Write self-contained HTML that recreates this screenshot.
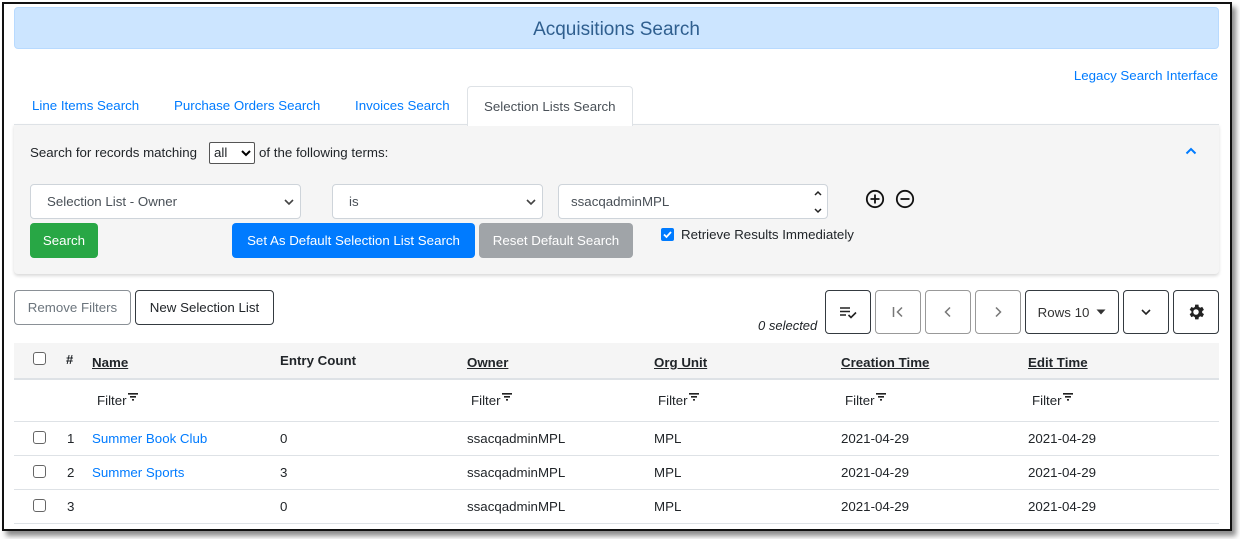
<!DOCTYPE html>
<html><head><meta charset="utf-8"><style>
*{box-sizing:border-box;margin:0;padding:0}
body{width:1240px;height:539px;background:#fff;font-family:"Liberation Sans",sans-serif;font-size:13.3px;color:#212529;position:relative;overflow:hidden}
.a{position:absolute}
.frame{left:2px;top:2px;width:1230px;height:529px;border:2px solid #111;box-shadow:4px 5px 5px rgba(0,0,0,.45)}
.blue{color:#007bff}
.btn{position:absolute;border-radius:4px;display:flex;align-items:center;justify-content:center;font-size:13.3px}
.ob{border:1px solid #343a40;background:#fff}
.og{border:1px solid #6c757d;background:#fff}
.sel{position:absolute;background:#fff;border:1px solid #ced4da;border-radius:4px;display:flex;align-items:center;padding-left:16px;color:#495057}
.cb{position:absolute;width:13px;height:13px;border:1px solid #666;border-radius:3px;background:#fff}
.hl{position:absolute;left:14px;width:1205px;height:1px;background:#dee2e6}
.th{font-weight:bold}
.u{text-decoration:underline;font-weight:bold}
</style></head><body>
<div class="a frame"></div>
<div class="a" style="left:14px;top:7px;width:1205px;height:42px;background:#cce5ff;border:1px solid #b8daff;border-radius:4px;display:flex;align-items:center;justify-content:center;font-size:19px;color:#2f5f8f;padding-top:4px">Acquisitions Search</div>
<div class="a blue" style="right:22px;top:68px">Legacy Search Interface</div>
<div class="a blue" style="left:32px;top:98px">Line Items Search</div>
<div class="a blue" style="left:174px;top:98px">Purchase Orders Search</div>
<div class="a blue" style="left:355px;top:98px">Invoices Search</div>
<div class="a" style="left:467px;top:86px;width:166px;height:40px;border:1px solid #dee2e6;border-bottom:none;border-radius:4px 4px 0 0;background:#fff;color:#495057;padding:12px 0 0 16px;z-index:2">Selection Lists Search</div>
<div class="a" style="left:14px;top:124px;width:1205px;height:150px;background:#f5f5f5;border-top:1px solid #dee2e6;border-radius:0 0 4px 4px;box-shadow:0 2px 3px rgba(0,0,0,.15)"></div>
<div class="a" style="left:30px;top:145px">Search for records matching</div>
<div class="a" style="left:209px;top:142px;width:46px;height:22px;border:1px solid #555;border-radius:2px;background:#fff;padding:2px 0 0 4px">all<svg class="a" style="left:31px;top:6px" width="10" height="8" viewBox="0 0 10 8"><path d="M1 2l4 4 4-4" stroke="#000" stroke-width="2" fill="none"/></svg></div>
<div class="a" style="left:259px;top:145px">of the following terms:</div>
<svg class="a" style="left:1185px;top:147px" width="12" height="8" viewBox="0 0 12 8"><path d="M1.5 6.5L6 2l4.5 4.5" stroke="#007bff" stroke-width="2" fill="none"/></svg>
<div class="sel" style="left:30px;top:184px;width:271px;height:35px">Selection List - Owner<svg class="a" style="right:6px;top:13px" width="10" height="8" viewBox="0 0 10 8"><path d="M1 2l4 4 4-4" stroke="#444" stroke-width="1.6" fill="none"/></svg></div>
<div class="sel" style="left:332px;top:184px;width:211px;height:35px">is<svg class="a" style="right:6px;top:13px" width="10" height="8" viewBox="0 0 10 8"><path d="M1 2l4 4 4-4" stroke="#444" stroke-width="1.6" fill="none"/></svg></div>
<div class="sel" style="left:558px;top:184px;width:270px;height:35px;padding-left:12px">ssacqadminMPL<svg class="a" style="right:4px;top:4px" width="10" height="26" viewBox="0 0 10 26"><path d="M2 6l3-3 3 3M2 20l3 3 3-3" stroke="#222" stroke-width="1.5" fill="none"/></svg></div>
<svg class="a" style="left:865px;top:189px" width="20" height="20" viewBox="0 0 20 20"><circle cx="10" cy="10" r="8.2" stroke="#111" stroke-width="1.8" fill="none"/><path d="M10 5.5v9M5.5 10h9" stroke="#111" stroke-width="1.8"/></svg>
<svg class="a" style="left:895px;top:189px" width="20" height="20" viewBox="0 0 20 20"><circle cx="10" cy="10" r="8.2" stroke="#111" stroke-width="1.8" fill="none"/><path d="M5.5 10h9" stroke="#111" stroke-width="1.8"/></svg>
<div class="btn" style="left:30px;top:223px;width:68px;height:35px;background:#28a745;color:#fff">Search</div>
<div class="btn" style="left:232px;top:223px;width:243px;height:35px;background:#007bff;color:#fff">Set As Default Selection List Search</div>
<div class="btn" style="left:479px;top:223px;width:154px;height:35px;background:#a0a4a8;color:#fff">Reset Default Search</div>
<div class="a" style="left:661px;top:228px;width:13px;height:13px;background:#007bff;border-radius:2px"><svg width="13" height="13" viewBox="0 0 13 13"><path d="M3 6.5l2.5 2.5 4.5-5" stroke="#fff" stroke-width="1.8" fill="none"/></svg></div>
<div class="a" style="left:681px;top:227px">Retrieve Results Immediately</div>

<div class="btn og" style="left:14px;top:290px;width:117px;height:35px;color:#6c757d;border-color:#8a9096">Remove Filters</div>
<div class="btn ob" style="left:135px;top:290px;width:139px;height:35px">New Selection List</div>
<div class="a" style="left:758px;top:318px;font-style:italic;font-size:13px">0 selected</div>
<div class="btn ob" style="left:825px;top:290px;width:46px;height:44px"><svg width="20" height="16" viewBox="0 0 20 16"><path d="M2 4h10M2 7.5h10M2 11h6" stroke="#222" stroke-width="1.6"/><path d="M10.5 11l2.5 2.5 5-5" stroke="#222" stroke-width="1.6" fill="none"/></svg></div>
<div class="btn og" style="left:875px;top:290px;width:46px;height:44px;border-color:#999"><svg width="16" height="14" viewBox="0 0 16 14"><path d="M3.5 2v10M12 2.5L7.5 7l4.5 4.5" stroke="#777" stroke-width="1.5" fill="none"/></svg></div>
<div class="btn og" style="left:925px;top:290px;width:46px;height:44px;border-color:#999"><svg width="12" height="14" viewBox="0 0 12 14"><path d="M8 2.5L3.5 7 8 11.5" stroke="#777" stroke-width="1.5" fill="none"/></svg></div>
<div class="btn og" style="left:975px;top:290px;width:46px;height:44px;border-color:#999"><svg width="12" height="14" viewBox="0 0 12 14"><path d="M4 2.5L8.5 7 4 11.5" stroke="#777" stroke-width="1.5" fill="none"/></svg></div>
<div class="btn ob" style="left:1025px;top:290px;width:94px;height:44px;color:#333">Rows 10<svg style="margin-left:7px" width="10" height="6" viewBox="0 0 10 6"><path d="M0.5 0.5h9L5 5.5z" fill="#333"/></svg></div>
<div class="btn ob" style="left:1123px;top:290px;width:46px;height:44px"><svg width="12" height="8" viewBox="0 0 12 8"><path d="M2 2l4 4 4-4" stroke="#222" stroke-width="1.6" fill="none"/></svg></div>
<div class="btn ob" style="left:1173px;top:290px;width:46px;height:44px"><svg width="20" height="20" viewBox="0 0 24 24"><path fill="#222" d="M19.4 13a7.5 7.5 0 0 0 0-2l2.1-1.6-2-3.5-2.5 1a7.6 7.6 0 0 0-1.7-1L15 3.2h-4L10.6 6a7.6 7.6 0 0 0-1.7 1l-2.5-1-2 3.5L6.5 11a7.5 7.5 0 0 0 0 2l-2.1 1.6 2 3.5 2.5-1a7.6 7.6 0 0 0 1.7 1l.4 2.7h4l.4-2.7a7.6 7.6 0 0 0 1.7-1l2.5 1 2-3.5zM12 15.3a3.3 3.3 0 1 1 0-6.6 3.3 3.3 0 0 1 0 6.6z"/></svg></div>

<div class="a" style="left:14px;top:343px;width:1205px;height:35px;background:#f5f5f5"></div>
<div class="hl" style="top:378px;height:2px"></div>
<div class="cb" style="left:33px;top:352px"></div>
<div class="a th" style="left:66px;top:352px;font-size:13px">#</div>
<div class="a u" style="left:92px;top:355px">Name</div>
<div class="a th" style="left:280px;top:353px">Entry Count</div>
<div class="a u" style="left:467px;top:355px">Owner</div>
<div class="a u" style="left:654px;top:355px">Org Unit</div>
<div class="a u" style="left:841px;top:355px">Creation Time</div>
<div class="a u" style="left:1028px;top:355px">Edit Time</div>

<div class="a" style="left:97px;top:393px">Filter<svg width="10" height="8" viewBox="0 0 10 8" style="margin-left:1px;vertical-align:4px"><path d="M0 0h10v1.6H0zM2 3h6v1.6H2zM4 6h2v1.6H4z" fill="#222"/></svg></div>
<div class="a" style="left:471px;top:393px">Filter<svg width="10" height="8" viewBox="0 0 10 8" style="margin-left:1px;vertical-align:4px"><path d="M0 0h10v1.6H0zM2 3h6v1.6H2zM4 6h2v1.6H4z" fill="#222"/></svg></div>
<div class="a" style="left:658px;top:393px">Filter<svg width="10" height="8" viewBox="0 0 10 8" style="margin-left:1px;vertical-align:4px"><path d="M0 0h10v1.6H0zM2 3h6v1.6H2zM4 6h2v1.6H4z" fill="#222"/></svg></div>
<div class="a" style="left:845px;top:393px">Filter<svg width="10" height="8" viewBox="0 0 10 8" style="margin-left:1px;vertical-align:4px"><path d="M0 0h10v1.6H0zM2 3h6v1.6H2zM4 6h2v1.6H4z" fill="#222"/></svg></div>
<div class="a" style="left:1032px;top:393px">Filter<svg width="10" height="8" viewBox="0 0 10 8" style="margin-left:1px;vertical-align:4px"><path d="M0 0h10v1.6H0zM2 3h6v1.6H2zM4 6h2v1.6H4z" fill="#222"/></svg></div>
<div class="hl" style="top:421px"></div>

<div class="cb" style="left:33px;top:431px"></div>
<div class="a" style="left:67px;top:431px">1</div>
<div class="a blue" style="left:92px;top:431px">Summer Book Club</div>
<div class="a" style="left:280px;top:431px">0</div>
<div class="a" style="left:467px;top:431px">ssacqadminMPL</div>
<div class="a" style="left:654px;top:431px">MPL</div>
<div class="a" style="left:841px;top:431px">2021-04-29</div>
<div class="a" style="left:1028px;top:431px">2021-04-29</div>
<div class="hl" style="top:455px"></div>

<div class="cb" style="left:33px;top:465px"></div>
<div class="a" style="left:67px;top:465px">2</div>
<div class="a blue" style="left:92px;top:465px">Summer Sports</div>
<div class="a" style="left:280px;top:465px">3</div>
<div class="a" style="left:467px;top:465px">ssacqadminMPL</div>
<div class="a" style="left:654px;top:465px">MPL</div>
<div class="a" style="left:841px;top:465px">2021-04-29</div>
<div class="a" style="left:1028px;top:465px">2021-04-29</div>
<div class="hl" style="top:489px"></div>

<div class="cb" style="left:33px;top:499px"></div>
<div class="a" style="left:67px;top:499px">3</div>
<div class="a" style="left:280px;top:499px">0</div>
<div class="a" style="left:467px;top:499px">ssacqadminMPL</div>
<div class="a" style="left:654px;top:499px">MPL</div>
<div class="a" style="left:841px;top:499px">2021-04-29</div>
<div class="a" style="left:1028px;top:499px">2021-04-29</div>
<div class="hl" style="top:523px"></div>
</body></html>
